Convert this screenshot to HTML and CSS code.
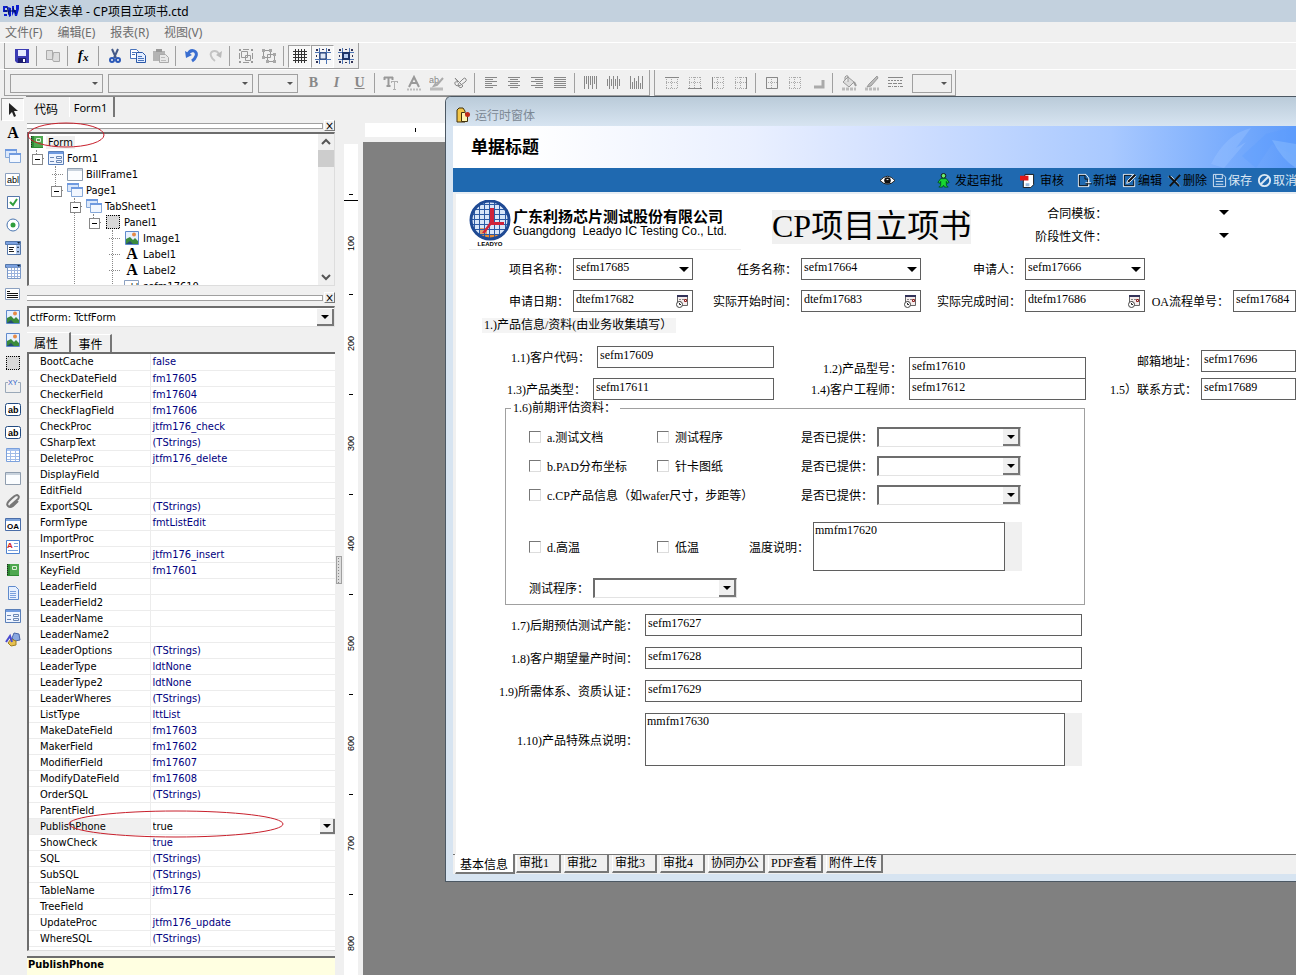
FILE: index.html
```html
<!DOCTYPE html>
<html lang="zh-CN">
<head>
  <meta charset="UTF-8" />
  <meta name="viewport" content="width=device-width, initial-scale=1.0"/>
  <title>自定义表单 - CP项目立项书.ctd</title>
  <link rel="stylesheet" href="styles.css">
</head>
<body>
  <!-- 图标 -->
  <svg class="sprite" aria-hidden="true">
    <symbol id="i-save" viewBox="0 0 16 16"><path d="M1 1h14v14H3l-2-2z" fill="#3c3cb4"/><path d="M4 2h8v6H4z" fill="#e8ecff"/><path d="M4 10h8v5H4z" fill="#1c1c70"/><path d="M9 11h2v3H9z" fill="#fff"/></symbol>
    <symbol id="i-book" viewBox="0 0 16 16"><path d="M1.500 2.500h6v9h-6zM8.500 4.500h6v9h-6l-1-2z" fill="#ddd" stroke="#aaa"/></symbol>
    <symbol id="i-fx" viewBox="0 0 16 16"><text x="2" y="12" font-family="Liberation Serif" font-size="14" font-style="italic" font-weight="bold">f</text><text x="7" y="13" font-family="Liberation Serif" font-size="11" font-style="italic" font-weight="bold">x</text></symbol>
    <symbol id="i-cut" viewBox="0 0 16 16"><path d="M5 1l4 9M11 1L7 10" stroke="#445a88" stroke-width="2"/><circle cx="5" cy="12" r="2" fill="none" stroke="#2a58b8" stroke-width="2"/><circle cx="11" cy="12" r="2" fill="none" stroke="#2a58b8" stroke-width="2"/></symbol>
    <symbol id="i-copy" viewBox="0 0 16 16"><path d="M.5 1.500h6l2 2v7h-8z" fill="#fff" stroke="#4a74bc"/><path d="M6.500 4.500h6l3 3v7h-9z" fill="#e4eeff" stroke="#2a58a8"/><path d="M2 4.500h4M2 6.500h3M8 8.500h4M8 10.500h6M8 12.500h6" stroke="#4a74bc"/></symbol>
    <symbol id="i-paste" viewBox="0 0 16 16"><path d="M0 3h12v10H0z" fill="#b4b4b4"/><path d="M3 1h6v3H3z" fill="#999"/><path d="M6.500 6.500h6l3 3v5h-9z" fill="#e8e8e8" stroke="#aaa"/><path d="M8 9.500h4M8 12.500h5" stroke="#bbb"/></symbol>
    <symbol id="i-undo" viewBox="0 0 16 16"><path d="M4 6C7 0 14 3 12 8q-1 3-4 5" fill="none" stroke="#3a6ed0" stroke-width="3"/><path d="M1 3l1 7 6-3z" fill="#3a6ed0"/></symbol>
    <symbol id="i-redo" viewBox="0 0 16 16"><path d="M12 6C9 1 2 3 4 8q1 3 4 5" fill="none" stroke="#c4c4c4" stroke-width="2"/><path d="M15 3l-1 7-5-3z" fill="#bbb"/></symbol>
    <symbol id="i-group" viewBox="0 0 16 16"><path d="M3.500 3.500h6v6h-6zM7.500 7.500h5v5h-5z" fill="none" stroke="#999"/><path d="M1 1h2v2H1zM13 1h2v2h-2zM1 13h2v2H1zM13 13h2v2h-2zM5 1h6v1H5zM14 5v6h1V5zM5 14h6v1H5zM1 5h1v6H1z" fill="#999"/></symbol>
    <symbol id="i-ungroup" viewBox="0 0 16 16"><path d="M2.500 2.500h7v7h-7zM6.500 6.500h7v7h-7z" fill="none" stroke="#999"/><path d="M1 1h3v3H1zM8 1h3v3H8zM1 8h3v3H1zM12 5h3v3h-3zM5 12h3v3H5zM12 12h3v3h-3z" fill="#a8a8a8"/></symbol>
    <symbol id="i-grid" viewBox="0 0 16 16"><path d="M3.500 1v14M6.500 1v14M9.500 1v14M12.500 1v14M1 3.500h14M1 6.500h14M1 9.500h14M1 12.500h14" stroke="#333"/></symbol>
    <symbol id="i-snap" viewBox="0 0 16 16"><path d="M4.500 0v16M11.500 0v16M0 4.500h16M0 11.500h16" stroke="#4c74b4"/><path d="M5 5h6v6H5z" fill="#dfe9f8" stroke="#1c3468"/><path d="M1 1h2v2H1zM7 1h2v1H7zM13 1h2v2h-2zM1 7h1v2H1zM1 13h2v2H1z" fill="#335"/></symbol>
    <symbol id="i-snap2" viewBox="0 0 16 16"><path d="M4.500 0v16M11.500 0v16M0 4.500h16M0 11.500h16" stroke="#4c74b4"/><path d="M5 5h6v6H5z" fill="#b8cef0" stroke="#1c3468" stroke-width="2"/><path d="M1 1h2v2H1zM7 1h2v1H7zM13 1h2v2h-2zM1 7h1v2H1zM14 7h1v2h-1zM1 13h2v2H1zM7 14h2v1H7zM13 13h2v2h-2z" fill="#335"/></symbol>
    <symbol id="i-font" viewBox="0 0 16 16"><path d="M1 2.500h9M5.500 2v9M3.500 11h4M1.500 2v3M9.500 2v3" stroke="#999" stroke-width="2" fill="none"/><path d="M8 6.500h7M11.500 7v8M10 14.500h3M8.500 6v2M14.500 6v2" stroke="#b0b0b0" fill="none"/></symbol>
    <symbol id="i-fcolor" viewBox="0 0 16 16"><path d="M3 12L8 2l5 10M5 8h6" fill="none" stroke="#999" stroke-width="2"/><path d="M1 14.500h14" stroke="#bbb" stroke-width="2" stroke-dasharray="2 1"/></symbol>
    <symbol id="i-hilite" viewBox="0 0 16 16"><text x="0" y="8" font-family="Liberation Sans" font-size="9" fill="#888">ab</text><path d="M14 3L8 10l-3 1 2-3" fill="none" stroke="#aaa" stroke-width="2"/><path d="M1 14h13" stroke="#bbb" stroke-width="3"/></symbol>
    <symbol id="i-link" viewBox="0 0 16 16"><path d="M3 3l8 8q-2 3-4 1t0-4l4-4q2-2 3 0t-1 3l-4 3q-5 2-6-1t3-2z" fill="none" stroke="#888"/></symbol>
    <symbol id="i-left" viewBox="0 0 16 16"><path d="M2 2.500h12M2 4.500h8M2 6.500h12M2 8.500h7M2 10.500h12M2 12.500h8" stroke="#888"/></symbol>
    <symbol id="i-center" viewBox="0 0 16 16"><path d="M2 2.500h12M4 4.500h8M2 6.500h12M4 8.500h8M2 10.500h12M4 12.500h8" stroke="#888"/></symbol>
    <symbol id="i-right" viewBox="0 0 16 16"><path d="M2 2.500h12M6 4.500h8M2 6.500h12M7 8.500h7M2 10.500h12M6 12.500h8" stroke="#888"/></symbol>
    <symbol id="i-justify" viewBox="0 0 16 16"><path d="M2 2.500h12M2 4.500h12M2 6.500h12M2 8.500h12M2 10.500h12M2 12.500h12" stroke="#888"/></symbol>
    <symbol id="i-vtop" viewBox="0 0 16 16"><path d="M1.500 1v13M3.500 1v8M5.500 1v13M7.500 1v9M9.500 1v13M11.500 1v8M13.500 1v13" stroke="#888"/></symbol>
    <symbol id="i-vmid" viewBox="0 0 16 16"><path d="M1.500 4v7M3.500 1v13M5.500 4v7M7.500 1v13M9.500 4v7M11.500 1v13M13.500 4v7" stroke="#888"/></symbol>
    <symbol id="i-vbot" viewBox="0 0 16 16"><path d="M1.500 1v13M3.500 7v7M5.500 3v11M7.500 6v8M9.500 1v13M11.500 8v6M13.500 1v13" stroke="#888"/></symbol>
    <symbol id="i-dots" viewBox="0 0 16 16"><path d="M2 2.500h12M2 7.500h12M2 13.500h12M2.500 2v12M7.500 2v12M13.500 2v12" stroke="#aaa" stroke-dasharray="1 1"/></symbol>
    <symbol id="i-btop" viewBox="0 0 16 16"><use href="#i-dots"/><path d="M1 2.500h14" stroke="#888"/></symbol>
    <symbol id="i-bbot" viewBox="0 0 16 16"><use href="#i-dots"/><path d="M1 13.500h14" stroke="#888"/></symbol>
    <symbol id="i-bleft" viewBox="0 0 16 16"><use href="#i-dots"/><path d="M2.500 2v12" stroke="#888"/></symbol>
    <symbol id="i-bright" viewBox="0 0 16 16"><use href="#i-dots"/><path d="M13.500 2v12" stroke="#888"/></symbol>
    <symbol id="i-ball" viewBox="0 0 16 16"><use href="#i-dots"/><path d="M2.500 2.500h11v11h-11z" fill="none" stroke="#888"/></symbol>
    <symbol id="i-shadow" viewBox="0 0 16 16"><path d="M4 12h9V5" fill="none" stroke="#aaa" stroke-width="3"/></symbol>
    <symbol id="i-fill" viewBox="0 0 16 16"><path d="M7 2l6 5-5 5-6-5zM7 7V1q-2-1-3 1v3" fill="#ddd" stroke="#999"/><path d="M13 7l2 4" stroke="#999" stroke-width="2"/><path d="M1 14h14" stroke="#bbb" stroke-width="3" stroke-dasharray="3 1"/></symbol>
    <symbol id="i-brush" viewBox="0 0 16 16"><path d="M13 1L5 9l-2 3 4-1 7-8z" fill="#bbb" stroke="#999"/><path d="M1 14h14" stroke="#bbb" stroke-width="3" stroke-dasharray="3 1"/></symbol>
    <symbol id="i-lines" viewBox="0 0 16 16"><path d="M1 2.500h15" stroke="#888"/><path d="M1 5.500h15" stroke="#888" stroke-dasharray="2 1"/><path d="M1 8.500h15" stroke="#888" stroke-dasharray="4 1"/><path d="M1 11.500h15" stroke="#888" stroke-dasharray="3 1 1 1"/></symbol>

    <symbol id="i-cursor" viewBox="0 0 16 16"><path d="M4 1v12l3-3 2 5 2-1-2-5h4z" fill="#222"/></symbol>
    <symbol id="i-a" viewBox="0 0 16 16"><text x="8" y="13" text-anchor="middle" font-family="Liberation Serif" font-size="16" font-weight="bold">A</text></symbol>
    <symbol id="i-pages" viewBox="0 0 16 16"><path d="M.5 1.500h11v8H.5z" fill="#dbe8fb" stroke="#86a8d8"/><path d="M0 1h12v2H0z" fill="#6f9ae0"/><path d="M4.500 5.500h11v9h-11z" fill="#f2f7ff" stroke="#86a8d8"/><path d="M4 5h12v2H4z" fill="#6f9ae0"/></symbol>
    <symbol id="i-abl" viewBox="0 0 16 16"><path d="M.5 2.500h14v12H.5z" fill="#fff" stroke="#8ba0c0"/><text x="2" y="12" font-family="Liberation Sans" font-size="9">abl</text></symbol>
    <symbol id="i-check" viewBox="0 0 16 16"><path d="M2.500 2.500h12v12h-12z" fill="#fff" stroke="#5577aa"/><path d="M5 8l3 3 4-6" fill="none" stroke="#2f9e3c" stroke-width="2"/></symbol>
    <symbol id="i-radio" viewBox="0 0 16 16"><circle cx="8" cy="8" r="6" fill="#fff" stroke="#4a76b0"/><circle cx="8" cy="8" r="2.500" fill="#2f9e3c"/></symbol>
    <symbol id="i-combo" viewBox="0 0 16 16"><path d="M.5 1.500h15v3H.5z" fill="#7aa0e0" stroke="#5577aa"/><path d="M2.500 4.500h13v10h-13z" fill="#fff" stroke="#5577aa"/><path d="M4 7.500h5M4 9.500h4M4 11.500h5" stroke="#222"/><path d="M11 5h4v9h-4z" fill="#b6cdf2"/><path d="M12 8l1-2 1 2zM12 11l1 2 1-2zM12 2h3l-1 2z" fill="#123"/></symbol>
    <symbol id="i-cal" viewBox="0 0 16 16"><path d="M.5 1.500h15v3H.5z" fill="#7aa0e0" stroke="#5577aa"/><path d="M2.500 4.500h13v11h-13z" fill="#fff" stroke="#7a98c8"/><path d="M3 7.500h12M3 10.500h12M3 13.500h12M6.500 5v10M9.500 5v10M12.500 5v10" stroke="#9ab2dc"/><path d="M12 2h3l-1 2z" fill="#123"/></symbol>
    <symbol id="i-memo" viewBox="0 0 16 16"><path d="M.5 2.500h14v11H.5z" fill="#fff" stroke="#8ba0c0"/><path d="M2 5.500h3M2 7.500h11M2 9.500h11M2 11.500h11" stroke="#111"/></symbol>
    <symbol id="i-image" viewBox="0 0 16 16"><path d="M1.500 1.500h13v13h-13z" fill="#e6f0ff" stroke="#5f8acc"/><path d="M2 14V9l4-2 3 3 2-2 3 3v3z" fill="#3a8a3c"/><path d="M2 14l4-3 3 3z" fill="#244a78"/><circle cx="10" cy="4.500" r="2" fill="#e58a48"/></symbol>
    <symbol id="i-panel" viewBox="0 0 16 16"><path d="M1 1h14v14H1z" fill="#d8d8d8"/><path d="M1 1.500h14M1 14.500h14M1.500 1v14M14.500 1v14" stroke="#000" stroke-dasharray="1 1"/></symbol>
    <symbol id="i-xy" viewBox="0 0 16 16"><path d="M3 4.500H.5v10h15v-10H13" fill="none" stroke="#9aa8b8"/><text x="3" y="7" font-family="Liberation Sans" font-size="7" fill="#2a58c8">XY</text></symbol>
    <symbol id="i-ab" viewBox="0 0 16 16"><rect x=".5" y="2.500" width="15" height="12" rx="2" fill="#fff" stroke="#224a80"/><text x="3" y="12" font-family="Liberation Sans" font-size="9" font-weight="bold">ab</text></symbol>
    <symbol id="i-table" viewBox="0 0 16 16"><path d="M1.500 1.500h13v13h-13z" fill="#fff" stroke="#7aa0dc"/><path d="M2 3h12" stroke="#a8c4f0" stroke-width="2"/><path d="M2 6.500h12M2 9.500h12M2 12.500h12M5.500 4v10M10.500 4v10" stroke="#a0bce8"/></symbol>
    <symbol id="i-frame" viewBox="0 0 16 16"><path d="M.5 2.500h15v12H.5z" fill="#fbfdff" stroke="#8f9dae"/><path d="M1 3h14v2H1z" fill="#c8d2dd"/></symbol>
    <symbol id="i-clip" viewBox="0 0 16 16"><path d="M5 13l8-7q2-3-1-4-2 0-8 6-3 3-1 5t5 0l5-5" fill="none" stroke="#777" stroke-width="2"/></symbol>
    <symbol id="i-oa" viewBox="0 0 16 16"><path d="M.5 2.500h15v12H.5z" fill="#fff" stroke="#4a6da8"/><path d="M1 3h14v2H1z" fill="#7da4dc"/><text x="2" y="13" font-family="Liberation Sans" font-size="8" font-weight="bold">OA</text></symbol>
    <symbol id="i-report" viewBox="0 0 16 16"><path d="M1.500 1.500h13v13h-13z" fill="#fff" stroke="#4f82d0"/><text x="2" y="9" font-family="Liberation Sans" font-size="8" font-weight="bold" fill="#d02020">A</text><path d="M9 4.500h4M9 7.500h4M3 11.500h10" stroke="#7aa0dc"/></symbol>
    <symbol id="i-green" viewBox="0 0 16 16"><path d="M2 2h12v12H2z" fill="#2f8a34"/><path d="M5 2h9v11H5z" fill="#4fa850"/><path d="M7.500 4.500h4v3h-4z" fill="none" stroke="#dff0d8"/><path d="M2.500 2v12" stroke="#222" stroke-dasharray="1 1"/></symbol>
    <symbol id="i-doc" viewBox="0 0 16 16"><path d="M3.500 1.500h7l3 3v10h-10z" fill="#e6f0ff" stroke="#5f8acc"/><path d="M5 6.500h6M5 8.500h6M5 10.500h6M5 12.500h6" stroke="#7aa0dc"/></symbol>
    <symbol id="i-form" viewBox="0 0 16 16"><path d="M.5 1.500h15v13H.5z" fill="#eef4ff" stroke="#5a7fb8"/><path d="M1 2h14v2H1z" fill="#6f9ae0"/><path d="M2 7.500h4M2 11.500h4M8.500 6.500h5v2h-5zM8.500 10.500h5v2h-5z" fill="none" stroke="#6a86b4"/></symbol>
    <symbol id="i-shapes" viewBox="0 0 16 16"><path d="M9 2l5 1 1 6-5 1-3-3z" fill="#8aa8e0" stroke="#4a66a8"/><path d="M6 8l5 2v4l-5 1-3-3z" fill="#e6c050" stroke="#a08020"/><path d="M1 11l4-6 2 6" fill="none" stroke="#4a4ad0" stroke-width="2"/></symbol>
    <symbol id="i-date" viewBox="0 0 16 16"><path d="M3.500 2.500h10v10h-10z" fill="#f4ecec" stroke="#666"/><path d="M3 2h11v2H3z" fill="#33335a"/><path d="M5 6.500h2M8 6.500h2M5 8.500h2" stroke="#888"/><path d="M10.500 6.500h2v2h-2z" fill="none" stroke="#902020"/><circle cx="5.500" cy="11.500" r="3" fill="#fff" stroke="#444"/><path d="M5.500 10v1.500H7" fill="none" stroke="#222"/></symbol>
  </svg>

  <div class="app">
    <header class="titlebar">
      <svg class="app-icon" viewBox="0 0 16 16"><path d="M0 3h4v2H2v2h2v2H0zM1 11h3v2H1zM5 4l3 1v8l-2 1zM9 3h2v4h2V2h3v4l-2 7h-2l-1-4-2 4z" fill="#0a1fd0"/><path d="M4 3l2 9M10 5l3 6M1 8h12" stroke="#001060"/></svg>
      <span>自定义表单 - CP项目立项书.ctd</span>
    </header>

    <nav class="menubar">
      <a href="#">文件(F)</a>
      <a href="#">编辑(E)</a>
      <a href="#">报表(R)</a>
      <a href="#">视图(V)</a>
    </nav>

    <div class="toolbars">
      <div class="toolbar">
        <button aria-label="保存"><svg><use href="#i-save"/></svg></button><i class="sep"></i>
        <button aria-label="目录"><svg><use href="#i-book"/></svg></button><i class="sep"></i>
        <button aria-label="函数"><svg><use href="#i-fx"/></svg></button><i class="sep"></i>
        <button aria-label="剪切"><svg><use href="#i-cut"/></svg></button>
        <button aria-label="复制"><svg><use href="#i-copy"/></svg></button>
        <button aria-label="粘贴"><svg><use href="#i-paste"/></svg></button><i class="sep"></i>
        <button aria-label="撤销"><svg><use href="#i-undo"/></svg></button>
        <button aria-label="重做"><svg><use href="#i-redo"/></svg></button><i class="sep"></i>
        <button aria-label="组合"><svg><use href="#i-group"/></svg></button>
        <button aria-label="取消组合"><svg><use href="#i-ungroup"/></svg></button><i class="sep"></i>
        <button aria-label="网格" class="pressed"><svg><use href="#i-grid"/></svg></button>
        <button aria-label="对齐网格" class="pressed"><svg><use href="#i-snap"/></svg></button>
        <button aria-label="适应网格"><svg><use href="#i-snap2"/></svg></button>
      </div>
    </div>

    <div class="toolbars">
      <div class="toolbar">
        <select class="tb-select tb-style" aria-label="样式"></select>
        <select class="tb-select tb-font" aria-label="字体"></select>
        <select class="tb-select tb-size" aria-label="字号"></select>
        <button class="txt"><b>B</b></button>
        <button class="txt"><em>I</em></button>
        <button class="txt"><u>U</u></button><i class="sep"></i>
        <button aria-label="字体设置"><svg><use href="#i-font"/></svg></button>
        <button aria-label="字体颜色"><svg><use href="#i-fcolor"/></svg></button>
        <button aria-label="突出显示"><svg><use href="#i-hilite"/></svg></button>
        <button aria-label="旋转"><svg><use href="#i-link"/></svg></button><i class="sep"></i>
        <button aria-label="左对齐"><svg><use href="#i-left"/></svg></button>
        <button aria-label="居中"><svg><use href="#i-center"/></svg></button>
        <button aria-label="右对齐"><svg><use href="#i-right"/></svg></button>
        <button aria-label="两端对齐"><svg><use href="#i-justify"/></svg></button><i class="sep"></i>
        <button aria-label="顶端"><svg><use href="#i-vtop"/></svg></button>
        <button aria-label="中部"><svg><use href="#i-vmid"/></svg></button>
        <button aria-label="底端"><svg><use href="#i-vbot"/></svg></button>
      </div>
      <div class="toolbar">
        <button aria-label="上边框"><svg><use href="#i-btop"/></svg></button>
        <button aria-label="下边框"><svg><use href="#i-bbot"/></svg></button>
        <button aria-label="左边框"><svg><use href="#i-bleft"/></svg></button>
        <button aria-label="右边框"><svg><use href="#i-bright"/></svg></button><i class="sep"></i>
        <button aria-label="全部边框"><svg><use href="#i-ball"/></svg></button>
        <button aria-label="无边框"><svg><use href="#i-dots"/></svg></button>
        <button aria-label="阴影"><svg><use href="#i-shadow"/></svg></button><i class="sep"></i>
        <button aria-label="填充颜色"><svg><use href="#i-fill"/></svg></button>
        <button aria-label="线条颜色"><svg><use href="#i-brush"/></svg></button>
        <button aria-label="线型"><svg><use href="#i-lines"/></svg></button>
        <select class="tb-select tb-width" aria-label="线宽"></select>
      </div>
    </div>

    <div class="workspace">
      <div class="toolbox">
        <button aria-label="选择" class="pressed"><svg><use href="#i-cursor"/></svg></button>
        <button aria-label="标签"><svg><use href="#i-a"/></svg></button>
        <button aria-label="页控件"><svg><use href="#i-pages"/></svg></button>
        <button aria-label="文本框"><svg><use href="#i-abl"/></svg></button>
        <button aria-label="复选框"><svg><use href="#i-check"/></svg></button>
        <button aria-label="单选框"><svg><use href="#i-radio"/></svg></button>
        <button aria-label="下拉框"><svg><use href="#i-combo"/></svg></button>
        <button aria-label="日期框"><svg><use href="#i-cal"/></svg></button>
        <button aria-label="多行文本"><svg><use href="#i-memo"/></svg></button>
        <button aria-label="图片"><svg><use href="#i-image"/></svg></button>
        <button aria-label="数据图片"><svg><use href="#i-image"/></svg></button>
        <button aria-label="面板"><svg><use href="#i-panel"/></svg></button>
        <button aria-label="分组框"><svg><use href="#i-xy"/></svg></button>
        <button aria-label="按钮"><svg><use href="#i-ab"/></svg></button>
        <button aria-label="图形按钮"><svg><use href="#i-ab"/></svg></button>
        <button aria-label="表格"><svg><use href="#i-table"/></svg></button>
        <button aria-label="框架"><svg><use href="#i-frame"/></svg></button>
        <button aria-label="附件"><svg><use href="#i-clip"/></svg></button>
        <button aria-label="OA"><svg><use href="#i-oa"/></svg></button>
        <button aria-label="报表"><svg><use href="#i-report"/></svg></button>
        <button aria-label="表单"><svg><use href="#i-green"/></svg></button>
        <button aria-label="文档"><svg><use href="#i-doc"/></svg></button>
        <button aria-label="窗体"><svg><use href="#i-form"/></svg></button>
        <button aria-label="图形"><svg><use href="#i-shapes"/></svg></button>
      </div>

      <div class="main">
        <div class="doc-tabs">
          <button>代码</button>
          <button class="active">Form1</button>
        </div>

        <div class="panes">
          <aside class="side">
            <div class="dock"><span></span><button aria-label="关闭">×</button></div>
            <div class="tree-box">
              <div class="tree">
                <div class="node root"><svg><use href="#i-green"/></svg><span class="sel">Form</span></div>
                <ul class="end">
                  <li><div class="node"><i class="twig box"></i><svg><use href="#i-form"/></svg>Form1</div>
                    <ul class="two">
                      <li><div class="node"><i class="twig"></i><svg><use href="#i-frame"/></svg>BillFrame1</div></li>
                      <li><div class="node"><i class="twig box"></i><svg><use href="#i-pages"/></svg>Page1</div>
                        <ul>
                          <li><div class="node"><i class="twig box"></i><svg><use href="#i-pages"/></svg>TabSheet1</div>
                            <ul class="end">
                              <li><div class="node"><i class="twig box"></i><svg><use href="#i-panel"/></svg>Panel1</div>
                                <ul>
                                  <li><div class="node"><i class="twig"></i><svg><use href="#i-image"/></svg>Image1</div></li>
                                  <li><div class="node"><i class="twig"></i><svg><use href="#i-a"/></svg>Label1</div></li>
                                  <li><div class="node"><i class="twig"></i><svg><use href="#i-a"/></svg>Label2</div></li>
                                  <li><div class="node"><i class="twig"></i><svg><use href="#i-abl"/></svg>sefm17610</div></li>
                                </ul>
                              </li>
                            </ul>
                          </li>
                        </ul>
                      </li>
                    </ul>
                  </li>
                </ul>
              </div>
              <div class="scroll">
                <svg viewBox="0 0 16 16"><path d="M4 10l4-4 4 4" /></svg>
                <div class="thumb"></div>
                <svg viewBox="0 0 16 16"><path d="M4 6l4 4 4-4" /></svg>
              </div>
              <svg class="mark mark-form" viewBox="0 0 78 26"><ellipse cx="39" cy="13" rx="38" ry="12"/></svg>
            </div>

            <div class="dock dock-props"><span></span><button aria-label="关闭">×</button></div>
            <select class="combo object-select" aria-label="对象"><option>ctfForm: TctfForm</option></select>
            <div class="prop-tabs">
              <button class="active">属性</button>
              <button>事件</button>
            </div>
            <div class="props">
              <table>
                <tr><td>BootCache</td><td>false</td></tr>
                <tr><td>CheckDateField</td><td>fm17605</td></tr>
                <tr><td>CheckerField</td><td>fm17604</td></tr>
                <tr><td>CheckFlagField</td><td>fm17606</td></tr>
                <tr><td>CheckProc</td><td>jtfm176_check</td></tr>
                <tr><td>CSharpText</td><td>(TStrings)</td></tr>
                <tr><td>DeleteProc</td><td>jtfm176_delete</td></tr>
                <tr><td>DisplayField</td><td></td></tr>
                <tr><td>EditField</td><td></td></tr>
                <tr><td>ExportSQL</td><td>(TStrings)</td></tr>
                <tr><td>FormType</td><td>fmtListEdit</td></tr>
                <tr><td>ImportProc</td><td></td></tr>
                <tr><td>InsertProc</td><td>jtfm176_insert</td></tr>
                <tr><td>KeyField</td><td>fm17601</td></tr>
                <tr><td>LeaderField</td><td></td></tr>
                <tr><td>LeaderField2</td><td></td></tr>
                <tr><td>LeaderName</td><td></td></tr>
                <tr><td>LeaderName2</td><td></td></tr>
                <tr><td>LeaderOptions</td><td>(TStrings)</td></tr>
                <tr><td>LeaderType</td><td>ldtNone</td></tr>
                <tr><td>LeaderType2</td><td>ldtNone</td></tr>
                <tr><td>LeaderWheres</td><td>(TStrings)</td></tr>
                <tr><td>ListType</td><td>lttList</td></tr>
                <tr><td>MakeDateField</td><td>fm17603</td></tr>
                <tr><td>MakerField</td><td>fm17602</td></tr>
                <tr><td>ModifierField</td><td>fm17607</td></tr>
                <tr><td>ModifyDateField</td><td>fm17608</td></tr>
                <tr><td>OrderSQL</td><td>(TStrings)</td></tr>
                <tr><td>ParentField</td><td></td></tr>
                <tr class="current"><td>PublishPhone</td><td><select class="prop-select" aria-label="PublishPhone"><option>true</option></select>
                  <svg class="mark mark-phone" viewBox="0 0 216 28"><ellipse cx="108" cy="14" rx="107" ry="13"/></svg></td></tr>
                <tr><td>ShowCheck</td><td>true</td></tr>
                <tr><td>SQL</td><td>(TStrings)</td></tr>
                <tr><td>SubSQL</td><td>(TStrings)</td></tr>
                <tr><td>TableName</td><td>jtfm176</td></tr>
                <tr><td>TreeField</td><td></td></tr>
                <tr><td>UpdateProc</td><td>jtfm176_update</td></tr>
                <tr><td>WhereSQL</td><td>(TStrings)</td></tr>
              </table>
            </div>
            <div class="hint">PublishPhone</div>
          </aside>

          <div class="splitter"><i></i></div>

          <div class="ruler-v">
            <div class="tick here"></div>
            <div class="tick"><span>100</span></div>
            <div class="tick"><span>200</span></div>
            <div class="tick"><span>300</span></div>
            <div class="tick"><span>400</span></div>
            <div class="tick"><span>500</span></div>
            <div class="tick"><span>600</span></div>
            <div class="tick"><span>700</span></div>
            <div class="tick"><span>800</span></div>
          </div>

          <div class="designer">
            <div class="ruler-h"></div>
            <div class="canvas"></div>
          </div>
        </div>
      </div>

      <!-- 运行时窗体 -->
      <section class="window">
        <div class="win-title">
          <svg viewBox="0 0 16 16"><path d="M2 3l2-2h4l2 3v11H2z" fill="#f3c648" stroke="#40300a"/><path d="M6.500 5.500h3l3 3v6h-6z" fill="#fff3b0" stroke="#40300a"/><circle cx="12.500" cy="7.500" r="2.500" fill="#c02a1a"/></svg>
          运行时窗体
        </div>
        <div class="banner">
          <h2>单据标题</h2>
          <svg class="leaf" viewBox="0 0 90 42"><path d="M5 38Q20 8 45 2L30 22l10-6-22 26z" fill="#9cc4ff" opacity=".4"/><path d="M36 30L60 8 90 0v30L66 18 50 42z" fill="#5a9aff" opacity=".3"/><path d="M66 14q10 20 24 28V18z" fill="#a6d0ff" opacity=".3"/></svg>
        </div>
        <div class="actions">
          <button class="act-view" aria-label="预览"><svg viewBox="0 0 16 16"><path d="M0 8q8-9 16 0-8 8-16 0z" fill="#fff" stroke="#111"/><circle cx="8" cy="8" r="3.500" fill="#111"/><path d="M7 7h2" stroke="#fff"/></svg></button>
          <button class="act-start"><svg viewBox="0 0 16 16"><circle cx="8" cy="3" r="2.500" fill="#6cf06c" stroke="#111"/><path d="M5 6h6l3 4-2 1-1-2v4l2 2H9l-1-2-1 2H3l2-2V9l-1 2-2-1z" fill="#18d830" stroke="#052"/></svg>发起审批</button>
          <button class="act-audit"><svg viewBox="0 0 16 16"><path d="M5.500 1.500h9v11l-3 3h-8v-7z" fill="#fff" stroke="#111"/><path d="M0 3h9v5H0z" fill="#e01818"/><path d="M6 11h4v3H6z" fill="#9bd"/></svg>审核</button>
          <button><svg viewBox="0 0 16 16"><path d="M1.500 1.500h8l3 4v9h-11z" fill="none" stroke="#fff"/><path d="M2.500 2.500h6v4h3v7h-9z" fill="none" stroke="#111"/><path d="M9 10.500h6M12.500 7v7" stroke="#fff"/><path d="M9 11.500h7" stroke="#111"/></svg>新增</button>
          <button><svg viewBox="0 0 16 16"><path d="M13.500 7v7.500h-12v-13h10" fill="none" stroke="#fff"/><path d="M12.500 8v5.500h-10v-11h7" fill="none" stroke="#111"/><path d="M15 3L8 10l-3 1 1-3 7-7" fill="#111" stroke="#fff"/></svg>编辑</button>
          <button><svg viewBox="0 0 16 16"><path d="M1 4h4l9 10" fill="none" stroke="#fff"/><path d="M2 3l11 11M14 2L3 14" stroke="#111" stroke-width="2"/></svg>删除</button>
          <button class="off"><svg viewBox="0 0 16 16"><path d="M1.500 1.500h10l3 3v10h-13zM4 2v4h7V2M4 9h8M4 12h8" fill="none" stroke="#dce8f4"/></svg>保存</button>
          <button class="off"><svg viewBox="0 0 16 16"><circle cx="8" cy="8" r="6" fill="none" stroke="#dce8f4" stroke-width="2"/><path d="M4 12l8-8" stroke="#dce8f4" stroke-width="2"/></svg>取消</button>
        </div>

        <form class="sheet">
          <div class="sheet-head">
            <div class="logo">
              <svg viewBox="0 0 42 48"><clipPath id="globe"><circle cx="21" cy="20" r="20"/></clipPath><g clip-path="url(#globe)"><path d="M0 0h42v42H0z" fill="#d8e6f8"/><path d="M11 17v11h7v9h-7z" fill="#e08030" opacity=".7"/><path d="M8 34h28v8H8z" fill="#e88a30"/><path d="M0 4.500h42M0 9.500h42M0 14.500h42M0 19.500h42M0 24.500h42M0 29.500h42M0 34.500h42M5.500 0v40M10.500 0v40M15.500 0v40M20.500 0v40M25.500 0v40M30.500 0v40M36.500 0v40" stroke="#2c5aa4"/><path d="M21 8h4v14h10v3H22l-6 8h-3l8-11z" fill="#d0243a"/></g><circle cx="21" cy="20" r="19" fill="none" stroke="#1f4a94" stroke-width="3"/><text x="21" y="46" text-anchor="middle" font-family="Liberation Sans" font-size="6" font-weight="bold">LEADYO</text></svg>
              <div>
                <strong>广东利扬芯片测试股份有限公司</strong>
                <span>Guangdong&nbsp; Leadyo IC Testing Co., Ltd.</span>
              </div>
            </div>
            <h1>CP项目立项书</h1>
            <div class="refs">
              <label for="tpl">合同模板：</label><select id="tpl" class="arrow"></select>
              <label for="stage">阶段性文件：</label><select id="stage" class="arrow"></select>
            </div>
          </div>

          <div class="top-grid">
            <label for="f85">项目名称：</label><select id="f85" class="field arrow"><option>sefm17685</option></select>
            <label for="f64">任务名称：</label><select id="f64" class="field arrow"><option>sefm17664</option></select>
            <label for="f66">申请人：</label><select id="f66" class="field arrow"><option>sefm17666</option></select>
            <span></span><span></span>
            <label for="f82">申请日期：</label><div class="date"><input id="f82" value="dtefm17682"><button type="button" aria-label="选择日期"><svg><use href="#i-date"/></svg></button></div>
            <label for="f83">实际开始时间：</label><div class="date"><input id="f83" value="dtefm17683"><button type="button" aria-label="选择日期"><svg><use href="#i-date"/></svg></button></div>
            <label for="f86">实际完成时间：</label><div class="date"><input id="f86" value="dtefm17686"><button type="button" aria-label="选择日期"><svg><use href="#i-date"/></svg></button></div>
            <label for="f84">OA流程单号：</label><input id="f84" class="field" value="sefm17684">
          </div>

          <p class="section">1.)产品信息/资料(由业务收集填写）</p>

          <div class="product">
            <div class="col col-a">
              <div class="line"><label for="f09">1.1)客户代码：</label><input id="f09" class="field w-code" value="sefm17609"></div>
              <div class="line"><label for="f11">1.3)产品类型：</label><input id="f11" class="field w-type" value="sefm17611"></div>
            </div>
            <div class="col col-b">
              <div class="line"><label for="f10">1.2)产品型号：</label><input id="f10" class="field w-code" value="sefm17610"></div>
              <div class="line"><label for="f12">1.4)客户工程师：</label><input id="f12" class="field w-code" value="sefm17612"></div>
            </div>
            <div class="col col-c">
              <div class="line"><label for="f96">邮箱地址：</label><input id="f96" class="field" value="sefm17696"></div>
              <div class="line"><label for="f89">1.5）联系方式：</label><input id="f89" class="field" value="sefm17689"></div>
            </div>
          </div>

          <fieldset>
            <legend>1.6)前期评估资料：</legend>
            <div class="check-row">
              <label><input type="checkbox">a.测试文档</label>
              <label><input type="checkbox">测试程序</label>
              <label for="s1">是否已提供：</label><select id="s1" class="combo"></select>
            </div>
            <div class="check-row">
              <label><input type="checkbox">b.PAD分布坐标</label>
              <label><input type="checkbox">针卡图纸</label>
              <label for="s2">是否已提供：</label><select id="s2" class="combo"></select>
            </div>
            <div class="check-row">
              <label class="wide"><input type="checkbox">c.CP产品信息（如wafer尺寸，步距等）</label>
              <label for="s3">是否已提供：</label><select id="s3" class="combo"></select>
            </div>
            <div class="temp-row">
              <label><input type="checkbox">d.高温</label>
              <label><input type="checkbox">低温</label>
              <label for="m20">温度说明：</label>
              <div class="memo"><textarea id="m20">mmfm17620</textarea></div>
            </div>
            <div class="prog-row">
              <label for="s4">测试程序：</label><select id="s4" class="combo"></select>
            </div>
          </fieldset>

          <div class="bottom-grid">
            <label for="f27">1.7)后期预估测试产能：</label><input id="f27" class="field" value="sefm17627">
            <label for="f28">1.8)客户期望量产时间：</label><input id="f28" class="field" value="sefm17628">
            <label for="f29">1.9)所需体系、资质认证：</label><input id="f29" class="field" value="sefm17629">
            <label for="m30">1.10)产品特殊点说明：</label><div class="memo"><textarea id="m30">mmfm17630</textarea></div>
          </div>
        </form>

        <div class="page-tabs">
          <button class="active">基本信息</button>
          <button>审批1</button>
          <button>审批2</button>
          <button>审批3</button>
          <button>审批4</button>
          <button>协同办公</button>
          <button>PDF查看</button>
          <button>附件上传</button>
        </div>
      </section>
    </div>
  </div>
</body>
</html>
```

FILE: styles.css
```css
* {
  box-sizing: border-box;
}

body {
  margin: 0;
  font-family: "Noto Sans", "Noto Sans CJK SC", sans-serif;
  font-size: 12px;
  color: #000;
  background-color: #f0f0f0;
}

button, select, input, textarea {
  font: inherit;
  color: inherit;
  margin: 0;
  padding: 0;
  border: 0;
  border-radius: 0;
  background: none;
  appearance: none;
  outline: 0;
}

ul {
  list-style: none;
  margin: 0;
  padding: 0;
}

.sprite {
  display: none;
}

.app {
  height: 100vh;
  display: flex;
  flex-direction: column;
  overflow: hidden;
}

/* title + menu */
.titlebar {
  height: 22px;
  flex: none;
  display: flex;
  align-items: center;
  gap: 4px;
  padding-left: 3px;
  background-color: #c3d1de;
}

.app-icon {
  width: 16px;
  height: 16px;
}

.menubar {
  height: 20px;
  flex: none;
  display: flex;
  align-items: center;
  gap: 15px;
  padding-left: 5px;
}

.menubar a {
  color: #6d6d6d;
  text-decoration: none;
}

/* toolbars */
.toolbars {
  flex: none;
  height: 27px;
  display: flex;
  border-top: 1px solid #fff;
}

.toolbar {
  display: flex;
  align-items: center;
  padding: 1px 1px 0 5px;
  margin-left: 4px;
  border-left: 1px solid #a0a0a0;
  border-right: 1px solid #a0a0a0;
  border-bottom: 1px solid #a0a0a0;
}

.toolbar button, .toolbox button {
  width: 23px;
  height: 23px;
  display: flex;
  align-items: center;
  justify-content: center;
}

.toolbar svg, .toolbox svg {
  width: 16px;
  height: 16px;
}

.toolbar .pressed, .toolbox .pressed {
  background-color: #f8f8f8;
  border: 1px solid #a0a0a0;
  border-right-color: #fff;
  border-bottom-color: #fff;
}

.toolbar .txt {
  font: 14px "Liberation Serif", serif;
  color: #888;
}

.toolbar .txt b, .toolbar .txt em, .toolbar .txt u {
  font-weight: bold;
}

.sep {
  width: 8px;
  height: 20px;
  background: linear-gradient(#a0a0a0, #a0a0a0) 3px 0 / 1px 100% no-repeat;
}

.tb-select {
  height: 19px;
  border: 1px solid #a0a0a0;
  background: url("data:image/svg+xml,%3Csvg xmlns='http://www.w3.org/2000/svg' width='6' height='3'%3E%3Cpath d='M0 0h6L3 3z' fill='%23555'/%3E%3C/svg%3E") right 4px center no-repeat;
}

.tb-style {
  width: 93px;
  margin-right: 5px;
}

.tb-font {
  width: 145px;
  margin-right: 5px;
}

.tb-size {
  width: 40px;
  margin-right: 4px;
}

.tb-width {
  width: 40px;
  margin: 0 2px 0 6px;
}

/* workspace */
.workspace {
  flex: 1;
  min-height: 0;
  display: flex;
  position: relative;
}

.toolbox {
  width: 26px;
  flex: none;
  padding: 2px 0 0 1px;
}

.main {
  flex: 1;
  min-width: 0;
  display: flex;
  flex-direction: column;
}

.doc-tabs {
  height: 24px;
  flex: none;
  display: flex;
  padding-left: 1px;
  border-top: 1px solid #888;
}

.doc-tabs button {
  width: 42px;
  padding-right: 4px;
}

.doc-tabs .active {
  width: 46px;
  height: 20px;
  padding-right: 2px;
  border-left: 1px solid #fff;
  border-right: 2px solid #777;
  font-size: 11px;
}

.panes {
  flex: 1;
  min-height: 0;
  display: flex;
}

.side {
  width: 308px;
  flex: none;
  display: flex;
  flex-direction: column;
  margin-left: 1px;
  font-family: "DejaVu Sans Condensed", "DejaVu Sans", sans-serif;
  font-size: 11px;
}

.dock {
  display: flex;
  align-items: center;
  gap: 1px;
  height: 11px;
  flex: none;
  margin-bottom: 1px;
}

.dock span {
  flex: 1;
  height: 6px;
  border: 1px solid #a0a0a0;
  border-left: 0;
  background-color: #fff;
}

.dock button {
  width: 11px;
  height: 11px;
  border: 1px solid #fff;
  border-right-color: #777;
  border-bottom-color: #777;
  font-size: 12px;
  line-height: 8px;
}

.dock-props {
  margin: 6px 0 3px;
}

.tree-box {
  height: 154px;
  flex: none;
  display: flex;
  position: relative;
  border: 1px solid #ddd;
  border-top: 2px solid #6d6d6d;
  border-left: 2px solid #6d6d6d;
  background-color: #fff;
}

.tree {
  flex: 1;
  overflow: hidden;
}

.node {
  height: 16px;
  display: flex;
  align-items: center;
  gap: 3px;
  white-space: nowrap;
}

.node svg {
  width: 16px;
  height: 16px;
  flex: none;
}

.root {
  gap: 1px;
}

.sel {
  padding: 0 2px;
  background-color: #f0f0f0;
}

.tree ul {
  margin-left: 19px;
  position: relative;
}

.tree > ul {
  margin-left: 3px;
}

/* vertical guide of each level */
.tree ul::before {
  content: "";
  position: absolute;
  left: 4px;
  top: 0;
  bottom: 0;
  border-left: 1px dotted #888;
}

.tree .end::before {
  bottom: auto;
  height: 8px;
}

.tree .two::before {
  bottom: auto;
  height: 24px;
}

.twig {
  width: 13px;
  height: 9px;
  flex: none;
  position: relative;
  background: linear-gradient(90deg, #888 50%, transparent 50%) 5px 4px / 2px 1px repeat-x;
}

.twig.box::before {
  content: "";
  position: absolute;
  left: 0;
  top: 0;
  width: 9px;
  height: 9px;
  border: 1px solid #888;
  background: linear-gradient(#000, #000) center / 5px 1px no-repeat #fff;
}

.scroll {
  width: 16px;
  display: flex;
  flex-direction: column;
  background-color: #f0f0f0;
}

.scroll svg {
  width: 16px;
  height: 16px;
  fill: none;
  stroke: #555;
  stroke-width: 2;
}

.scroll .thumb {
  height: 17px;
  margin-bottom: auto;
  background-color: #cdcdcd;
}

/* red pen marks */
.mark {
  position: absolute;
  fill: none;
  stroke: #c8202c;
  pointer-events: none;
}

.mark-form {
  width: 78px;
  height: 26px;
  left: -2px;
  top: -12px;
}

.mark-phone {
  width: 216px;
  height: 28px;
  left: -83px;
  top: -9px;
}

.combo {
  height: 20px;
  padding-left: 1px;
  border: 1px solid #e3e3e3;
  border-top: 2px solid #6d6d6d;
  border-left: 2px solid #6d6d6d;
  background: url("data:image/svg+xml,%3Csvg xmlns='http://www.w3.org/2000/svg' width='17' height='17'%3E%3Cpath d='M0 0h17v17H0z' fill='%23777'/%3E%3Cpath d='M0 0h15v15H0z' fill='%23f0f0f0'/%3E%3Cpath d='M4 6h8l-4 4z'/%3E%3C/svg%3E") right center no-repeat #fff;
}

.object-select {
  flex: none;
  height: 21px;
}

.prop-tabs {
  height: 25px;
  flex: none;
  display: flex;
  align-items: flex-end;
  padding-top: 5px;
  font-size: 12px;
  font-family: "Noto Sans CJK SC", sans-serif;
}

.prop-tabs button {
  height: 18px;
  width: 41px;
  line-height: 16px;
  border-top: 1px solid #fff;
  border-right: 2px solid #777;
}

.prop-tabs .active {
  width: 44px;
  height: 20px;
  padding-right: 4px;
}

.props {
  flex: none;
  height: 599px;
  border-top: 2px solid #6d6d6d;
  border-left: 2px solid #6d6d6d;
  border-bottom: 1px solid #ddd;
  background-color: #fff;
}

.props table {
  width: 100%;
  border-collapse: collapse;
  table-layout: fixed;
}

.props td {
  height: 16px;
  padding: 0 0 0 2px;
  line-height: 15px;
  border-bottom: 1px solid #ececec;
  color: #000080;
}

.props td:first-child {
  width: 121px;
  padding-left: 11px;
  border-right: 1px solid #ececec;
  color: #000;
}

.props .current td {
  position: relative;
  color: #000;
}

.props .current td:first-child {
  background-color: #f0f0f0;
}

.prop-select {
  display: block;
  width: 100%;
  height: 15px;
  background: url("data:image/svg+xml,%3Csvg xmlns='http://www.w3.org/2000/svg' width='15' height='15'%3E%3Cpath d='M0 0h15v15H0z' fill='%23777'/%3E%3Cpath d='M0 0h13v13H0z' fill='%23f0f0f0'/%3E%3Cpath d='M3 5h8L7 9z'/%3E%3C/svg%3E") right center no-repeat;
}

.hint {
  flex: 1;
  margin-top: 5px;
  border-top: 2px solid #6d6d6d;
  padding-left: 1px;
  background-color: #ffffe1;
  font-weight: bold;
}

.splitter {
  width: 9px;
  flex: none;
  padding: 436px 1px 0;
}

.splitter i {
  display: block;
  width: 6px;
  height: 28px;
  border: 1px solid #a0a0a0;
  background: radial-gradient(#888 1px, #ddd 1px) 0 0 / 3px 3px;
}

/* rulers */
.ruler-v {
  width: 14px;
  flex: none;
  margin-top: 24px;
  padding-top: 50px;
  overflow: hidden;
  background-color: #fff;
}

.tick {
  height: 100px;
  display: flex;
  align-items: center;
  justify-content: center;
  background: linear-gradient(#000, #000) center 0 / 4px 1px no-repeat;
}

.tick.here {
  height: 7px;
  margin-bottom: -7px;
  border-bottom: 1px solid #000;
}

.tick span {
  writing-mode: vertical-rl;
  transform: rotate(180deg);
  font: 9px "Liberation Sans", sans-serif;
}

.tick.here + .tick {
  background: none;
}

.designer {
  flex: 1;
  margin-left: 5px;
  display: flex;
  flex-direction: column;
}

.ruler-h {
  height: 14px;
  margin: 3px 0 5px 2px;
  background: linear-gradient(#000, #000) 50px center / 1px 4px no-repeat #fff;
}

.canvas {
  flex: 1;
  background-color: #808080;
}

/* runtime window */
.window {
  position: absolute;
  left: 445px;
  right: 0;
  top: 0;
  height: 786px;
  display: flex;
  flex-direction: column;
  padding: 0 0 7px 7px;
  overflow: hidden;
  border: 1px solid #4c5863;
  border-right: 0;
  border-radius: 6px 0 0 0;
  background-color: #d7e4f1;
}

.win-title {
  height: 29px;
  flex: none;
  display: flex;
  align-items: center;
  gap: 4px;
  margin-left: -7px;
  padding: 6px 0 0 9px;
  color: #7c8894;
  background: linear-gradient(#bacbd9, #d7e4f1);
}

.win-title svg {
  width: 16px;
  height: 16px;
}

.banner {
  height: 42px;
  flex: none;
  display: flex;
  align-items: center;
  justify-content: space-between;
  padding-left: 18px;
  background: linear-gradient(90deg, #fff 8%, #eaf0ff 35%, #d2e0ff 52%, #a9c9ff 78%, #5e9cfb 100%);
}

.banner h2 {
  margin: 0;
  padding-bottom: 4px;
  font-size: 17px;
  font-weight: bold;
}

.leaf {
  width: 90px;
  height: 42px;
}

.actions {
  height: 24px;
  flex: none;
  display: flex;
  align-items: center;
  gap: 5px;
  padding-left: 427px;
  background-color: #1f69b0;
}

.actions button {
  display: flex;
  align-items: center;
  gap: 1px;
  flex: none;
  white-space: nowrap;
}

.actions svg {
  width: 15px;
  height: 15px;
}

.actions .act-view {
  margin-right: 36px;
}

.actions .act-start {
  gap: 4px;
  margin-right: 12px;
}

.actions .act-audit {
  gap: 5px;
  margin-right: 8px;
}

.actions .off {
  color: #dce8f4;
}

/* form sheet */
.sheet {
  flex: 1;
  min-height: 0;
  padding-top: 4px;
  overflow: hidden;
  white-space: nowrap;
  border-left: 3px solid #f0f0f0;
  border-top: 2px solid #e8eef4;
  background-color: #fff;
  font-family: "Liberation Serif", "Noto Sans CJK SC", serif;
}

.sheet-head {
  display: flex;
  height: 60px;
}

.logo {
  width: 272px;
  height: 52px;
  display: flex;
  gap: 2px;
  margin-left: 13px;
  padding-top: 2px;
  border-bottom: 1px solid #eee;
  font-family: "Liberation Sans", "Noto Sans CJK SC", sans-serif;
}

.logo svg {
  width: 42px;
  height: 48px;
}

.logo strong, .logo span {
  display: block;
  line-height: 14px;
}

.logo strong {
  padding-top: 10px;
  font-size: 15px;
  font-weight: bold;
}

.logo span {
  font-size: 12px;
}

.sheet-head h1 {
  height: 34px;
  margin: 12px 0 0 31px;
  font-size: 32px;
  line-height: 32px;
  font-weight: normal;
  background-color: #f0f0f0;
}

.refs {
  display: grid;
  grid-template-columns: 136px 125px;
  grid-auto-rows: 23px;
  align-items: center;
  padding-top: 3px;
}

.refs label {
  text-align: right;
}

.arrow {
  background: url("data:image/svg+xml,%3Csvg xmlns='http://www.w3.org/2000/svg' width='10' height='5'%3E%3Cpath d='M0 0h10L5 5z'/%3E%3C/svg%3E") right 3px center no-repeat;
}

.refs .arrow {
  height: 20px;
}

.field, .date, .memo textarea {
  height: 22px;
  border: 1px solid #5f5f5f;
}

.field {
  min-width: 0;
  padding: 0 2px 4px;
}

.date {
  display: flex;
  padding: 0 2px;
}

.date input {
  flex: 1;
  min-width: 0;
  padding-bottom: 4px;
}

.date svg {
  display: block;
  width: 16px;
  height: 16px;
}

.top-grid {
  display: grid;
  grid-template-columns: 117px 120px 108px 120px 104px 120px 88px 1fr;
  gap: 10px 0;
  align-items: center;
}

.top-grid label {
  text-align: right;
  padding-right: 4px;
}

.line label, .bottom-grid label {
  text-align: right;
  padding-right: 7px;
}

.section {
  display: inline-block;
  margin: 6px 0 0 26px;
  padding: 0 4px 0 2px;
  line-height: 15px;
  background-color: #f4f4f4;
}

.product {
  display: flex;
  align-items: flex-end;
  margin-top: 13px;
}

.col {
  display: flex;
  flex-direction: column;
}

.col-a {
  width: 318px;
  gap: 10px;
}

.col-b {
  width: 312px;
}

.col-b .line + .line {
  margin-top: -1px;
}

.col-c {
  flex: 1;
  min-width: 0;
  gap: 6px;
}

.line {
  display: flex;
  align-items: center;
}

.line label {
  flex: 1;
}

.w-code {
  width: 177px;
}

.w-type {
  width: 181px;
}

.col-c label {
  flex: none;
  width: 115px;
  padding-right: 4px;
}

.col-c .field {
  flex: 1;
}

fieldset {
  width: 580px;
  margin: 0 0 9px 49px;
  padding: 11px 0 6px 23px;
  border: 1px solid #a0a0a0;
}

legend {
  margin-left: -18px;
  padding: 0 4px 0 2px;
  line-height: 16px;
}

fieldset label {
  display: flex;
  align-items: center;
}

input[type="checkbox"] {
  width: 12px;
  height: 12px;
  margin-right: 6px;
  border: 1px solid #ddd;
  border-top-color: #777;
  border-left-color: #777;
  background-color: #fff;
}

.check-row {
  display: grid;
  grid-template-columns: 128px 144px 76px 144px;
  align-items: center;
  margin-bottom: 9px;
}

.check-row .wide {
  grid-column: span 2;
}

.temp-row {
  display: grid;
  grid-template-columns: 128px 92px 64px 209px;
  align-items: center;
  margin-top: 17px;
}

.memo {
  display: flex;
  padding-right: 17px;
  background-color: #f0f0f0;
}

.memo textarea {
  flex: 1;
  height: 49px;
  padding: 0 1px;
  resize: none;
  background-color: #fff;
}

.prog-row {
  display: grid;
  grid-template-columns: 64px 144px;
  align-items: center;
  margin-top: 7px;
}

.bottom-grid {
  display: grid;
  grid-template-columns: 189px 437px;
  gap: 11px 0;
  align-items: center;
}

.bottom-grid textarea {
  height: 53px;
}

/* bottom page tabs */
.page-tabs {
  flex: none;
  height: 20px;
  display: flex;
  align-items: flex-start;
  gap: 3px;
  padding-left: 2px;
  border-top: 1px solid #777;
  background-color: #f0f0f0;
  font-family: "Liberation Serif", "Noto Sans CJK SC", serif;
}

.page-tabs button {
  height: 18px;
  min-width: 45px;
  padding: 0 4px 0 2px;
  line-height: 16px;
  text-align: left;
  border-right: 2px solid #777;
  border-bottom: 2px solid #777;
  border-left: 1px solid #fff;
}

.page-tabs .active {
  height: 20px;
  margin-top: -1px;
  margin-right: -2px;
  padding: 3px 5px 0 4px;
  background-color: #fff;
}
```
